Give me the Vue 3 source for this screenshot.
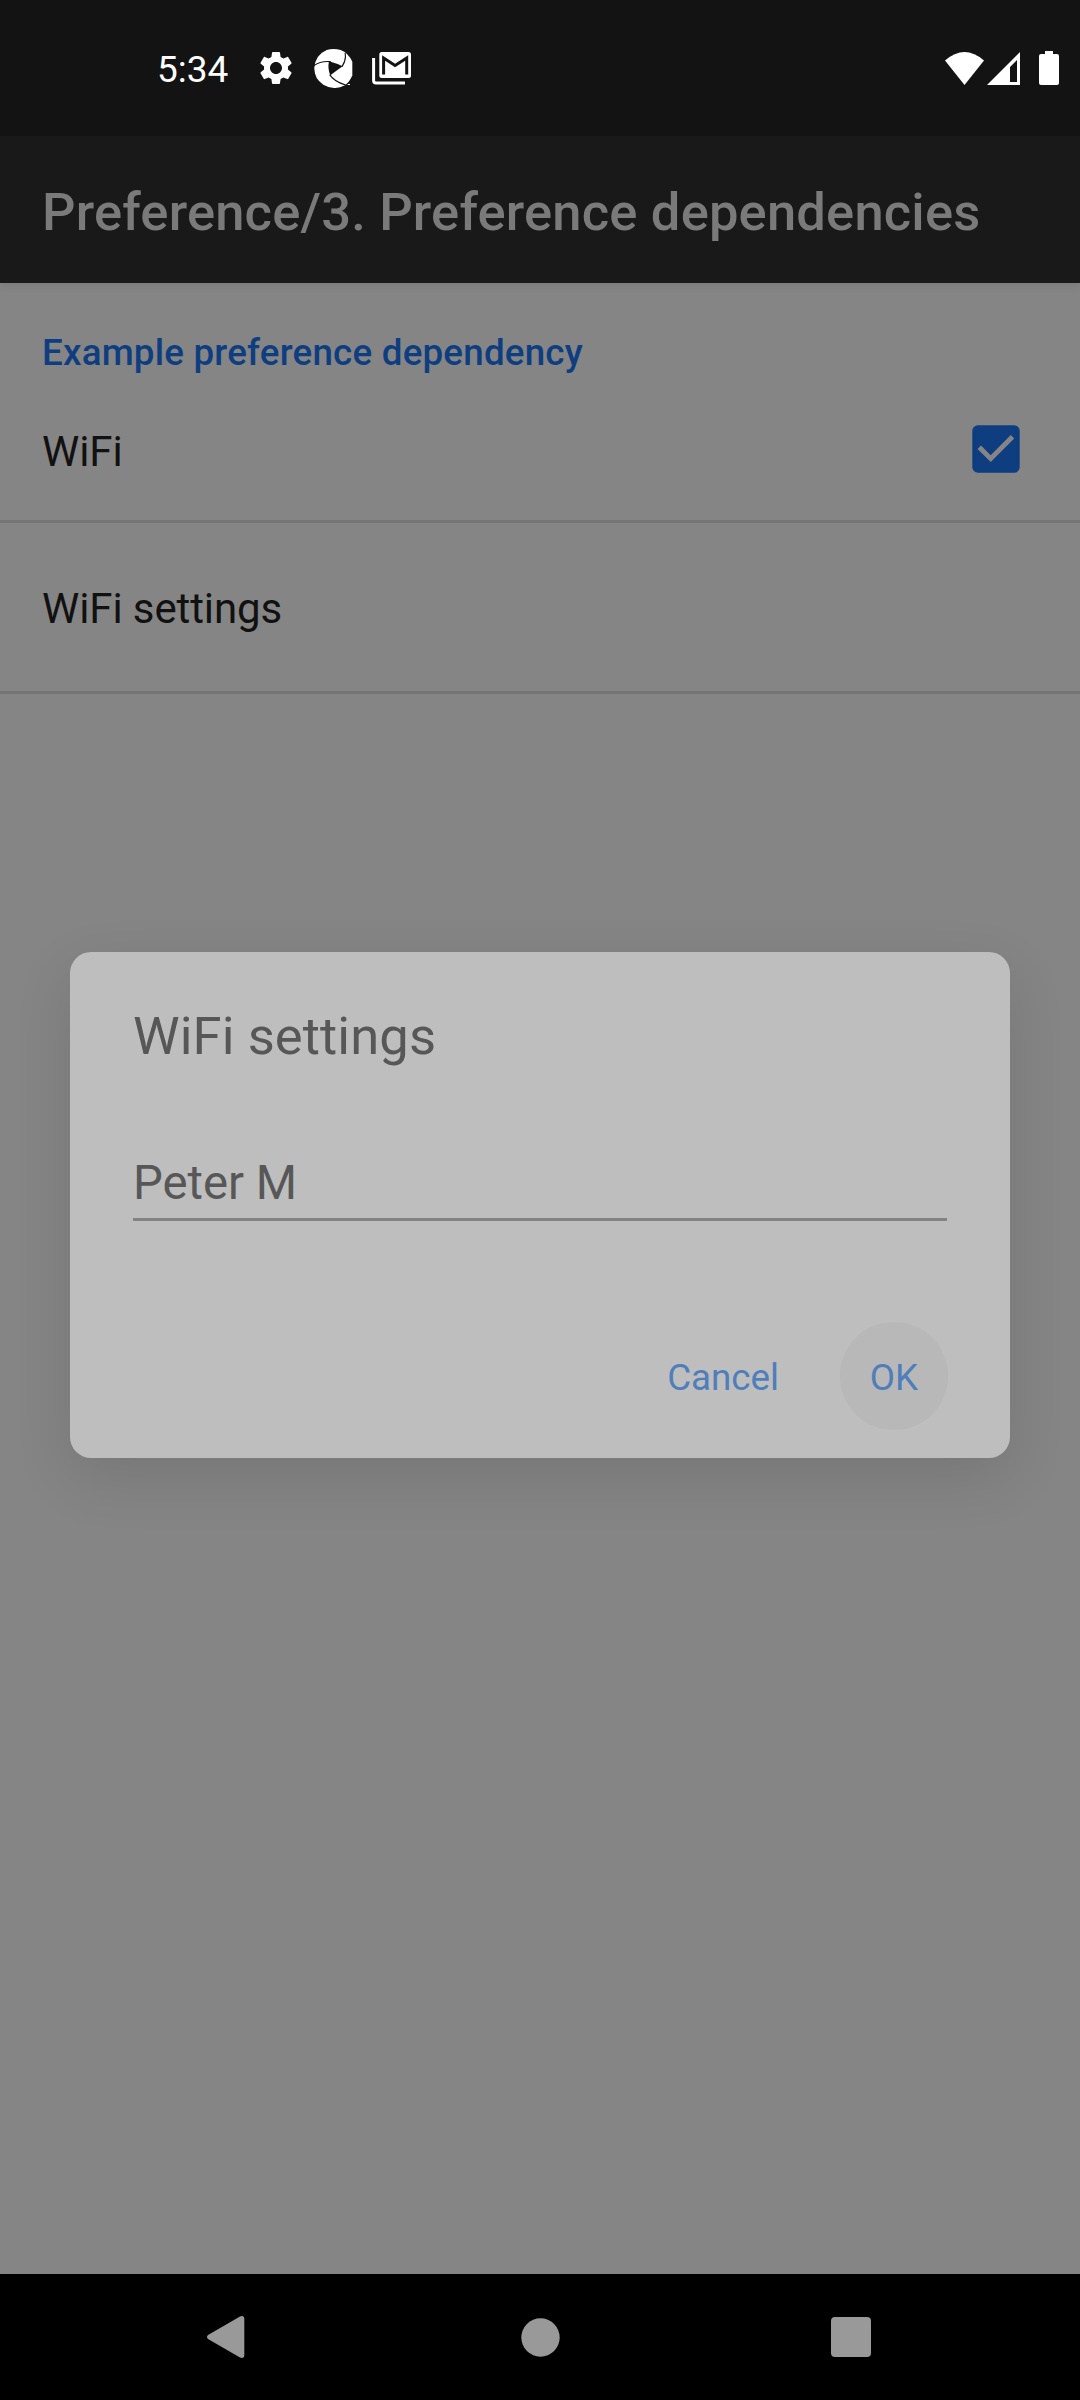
<script setup>
const title = 'Preference/3. Preference dependencies'
const category = 'Example preference dependency'
</script>

<template>
  <div class="screen">
    <header class="status">
      <div class="status-left">
        <span class="clock">5:34</span>
        <svg class="gear" width="40" height="40" viewBox="0 0 24 24" fill="#fff">
          <path d="M19.14 12.94c.04-.3.06-.61.06-.94 0-.32-.02-.64-.07-.94l2.03-1.58c.18-.14.23-.41.12-.61l-1.92-3.32c-.12-.22-.37-.29-.59-.22l-2.39.96c-.5-.38-1.03-.7-1.62-.94l-.36-2.54c-.04-.24-.24-.41-.48-.41h-3.84c-.24 0-.43.17-.47.41l-.36 2.54c-.59.24-1.13.57-1.62.94l-2.39-.96c-.22-.08-.47 0-.59.22L2.74 8.87c-.12.21-.08.47.12.61l2.03 1.58c-.05.3-.09.63-.09.94s.02.64.07.94l-2.03 1.58c-.18.14-.23.41-.12.61l1.92 3.32c.12.22.37.29.59.22l2.39-.96c.5.38 1.03.7 1.62.94l.36 2.54c.05.24.24.41.48.41h3.84c.24 0 .44-.17.47-.41l.36-2.54c.59-.24 1.13-.56 1.62-.94l2.39.96c.22.08.47 0 .59-.22l1.92-3.32c.12-.22.07-.47-.12-.61l-2.01-1.58zM12 15.6c-1.98 0-3.6-1.62-3.6-3.6s1.62-3.6 3.6-3.6 3.6 1.62 3.6 3.6-1.62 3.6-3.6 3.6z" />
        </svg>
        <svg class="swirl" width="39" height="39" viewBox="0 0 117 117">
          <path fill="#fff" d="M38 3Q58-3 80 3Q103 12 115 38V79Q107 99 93 109Q60 126 28 107Q0 88 1 56Q4 18 38 3Z" />
          <path fill="#131313" d="M45 37Q67 43 86 52Q69 64 49 79Q40 59 45 37Z" />
          <path fill="none" stroke="#131313" stroke-width="3.4" d="M0 50Q20 35 50 38M93 12Q98 31 84 53M47 77Q60 98 95 108" />
          <path fill="#fff" d="M101 105h7v3h-7z" />
        </svg>
        <svg class="mail" width="39" height="33" viewBox="0 0 39 33">
          <path fill="none" stroke="#fff" stroke-width="3" d="M1.600 6V28.500Q1.600 30.900 4 30.900H33" />
          <rect x="7.300" y="0" width="31.700" height="26" rx="2.500" fill="#fff" />
          <path fill="none" stroke="#131313" stroke-width="3" d="M11.600 22.600V6L23.100 13.400L34.700 6V22.600" />
        </svg>
      </div>
      <div class="status-right">
        <svg width="39" height="33" viewBox="0 0 39 33"><path fill="#fff" d="M0 8.500Q19.500-8.500 39 8.500L19.500 33Z" /></svg>
        <svg class="cell" width="33" height="33" viewBox="0 0 33 33"><path fill="#fff" fill-rule="evenodd" d="M33 0V33H0ZM30 8L23 15V30H30Z" /></svg>
        <svg class="battery" width="20" height="34" viewBox="0 0 20 34"><path fill="#fff" d="M6 0H14V3H18Q20 3 20 5V32Q20 34 18 34H2Q0 34 0 32V5Q0 3 2 3H6Z" /></svg>
      </div>
    </header>

    <div class="appbar"><h1>{{ title }}</h1></div>

    <main class="list">
      <h2 class="category">{{ category }}</h2>
      <div class="row wifi">
        <span class="label">WiFi</span>
        <svg class="checkbox" width="48" height="48" viewBox="0 0 48 48">
          <rect x=".3" y=".3" width="47.400" height="47.400" rx="5.500" fill="#0f3e80" />
          <path d="M7.300 22.200L18.700 33.600L40.500 11.800" fill="none" stroke="#858585" stroke-width="4.800" />
        </svg>
      </div>
      <div class="row settings"><span class="label">WiFi settings</span></div>
    </main>

    <nav class="nav">
      <svg width="38" height="42" viewBox="0 0 38 42"><path fill="#999" d="M1 19L33 .5Q37.300 -1 37.300 3V39Q37.300 43 33 41.500L1 23Q-1 21 1 19Z" /></svg>
      <svg class="home" width="39" height="39" viewBox="0 0 39 39"><circle cx="19.500" cy="19.500" r="19.200" fill="#999" /></svg>
      <svg width="40" height="40" viewBox="0 0 40 40"><rect width="40" height="40" rx="4" fill="#999" /></svg>
    </nav>

    <section class="dialog">
      <h3>WiFi settings</h3>
      <div class="field">Peter M</div>
      <div class="actions">
        <span class="btn cancel">Cancel</span>
        <span class="btn ok">OK</span>
      </div>
    </section>
  </div>
</template>

<style>
body { margin: 0; }
</style>

<style scoped>
.screen {
  position: relative;
  display: flex;
  flex-direction: column;
  width: 1080px;
  height: 2400px;
  overflow: hidden;
  background: #858585;
  font-family: Roboto, sans-serif;
}
h1, h2, h3 { margin: 0; }
svg { display: block; flex: none; }
.status {
  display: flex;
  justify-content: space-between;
  height: 136px;
  box-sizing: border-box;
  background: #131313;
}
.status-left, .status-right {
  display: flex;
  align-items: center;
  height: 136px;
}
.status-left { padding-left: 157px; }
.clock {
  width: 99px;
  padding-top: 4px;
  font-size: 37px;
  line-height: 44px;
  color: #fff;
}
.swirl { margin-left: 18px; }
.mail { margin-left: 19px; }
.status-right { padding-right: 21px; }
.cell { margin-left: 3px; }
.battery { margin-left: 19px; }
.appbar {
  position: relative;
  display: flex;
  align-items: center;
  height: 147px;
  box-sizing: border-box;
  padding: 4px 42px 0;
  background: #191919;
  box-shadow: 0 2px 9px rgba(0, 0, 0, .1);
  clip-path: inset(0 0 -20px 0);
}
h1 {
  font-size: 52.5px;
  font-weight: 500;
  line-height: 62px;
  letter-spacing: .18px;
  color: #7a7a7a;
  white-space: nowrap;
}
.list { flex: 1; }
.category {
  display: flex;
  align-items: center;
  height: 97px;
  box-sizing: border-box;
  padding: 42px 42px 0;
  font-size: 36.75px;
  font-weight: 500;
  line-height: 44px;
  letter-spacing: .2px;
  color: #0f3e80;
}
.row {
  display: flex;
  align-items: center;
  justify-content: space-between;
  box-sizing: border-box;
  padding: 0 60px 0 42px;
  border-bottom: 3px solid #757575;
}
.wifi { height: 143px; }
.settings { height: 171px; }
.label {
  padding-top: 3px;
  font-size: 42px;
  line-height: 50px;
  letter-spacing: -.1px;
  color: #111;
}
.checkbox { margin-bottom: 2px; }
.nav {
  display: flex;
  align-items: center;
  justify-content: space-between;
  height: 126px;
  box-sizing: border-box;
  padding: 0 209px 0 207px;
  background: #000;
}
.home { margin-left: 4px; }
.dialog {
  position: absolute;
  left: 70px;
  top: 952px;
  width: 940px;
  height: 506px;
  box-sizing: border-box;
  padding: 53px 63px 28px;
  border-radius: 21px;
  background: #bebebe;
  box-shadow: 0 20px 60px rgba(0, 0, 0, .11);
  color: #575757;
}
h3 {
  font-size: 52.5px;
  font-weight: 400;
  line-height: 62px;
  letter-spacing: .1px;
}
.field {
  margin-top: 88px;
  padding-bottom: 7px;
  border-bottom: 3px solid #828282;
  font-size: 47.25px;
  line-height: 56px;
}
.actions {
  display: flex;
  justify-content: flex-end;
  align-items: center;
  margin: 101px -1px 0 0;
}
.btn {
  display: flex;
  align-items: center;
  justify-content: center;
  height: 108px;
  box-sizing: border-box;
  padding-top: 3px;
  font-size: 36.75px;
  color: #4f7ebb;
}
.cancel { margin-right: 61px; }
.ok {
  width: 108px;
  border-radius: 50%;
  background: #b8b8b8;
}
</style>
